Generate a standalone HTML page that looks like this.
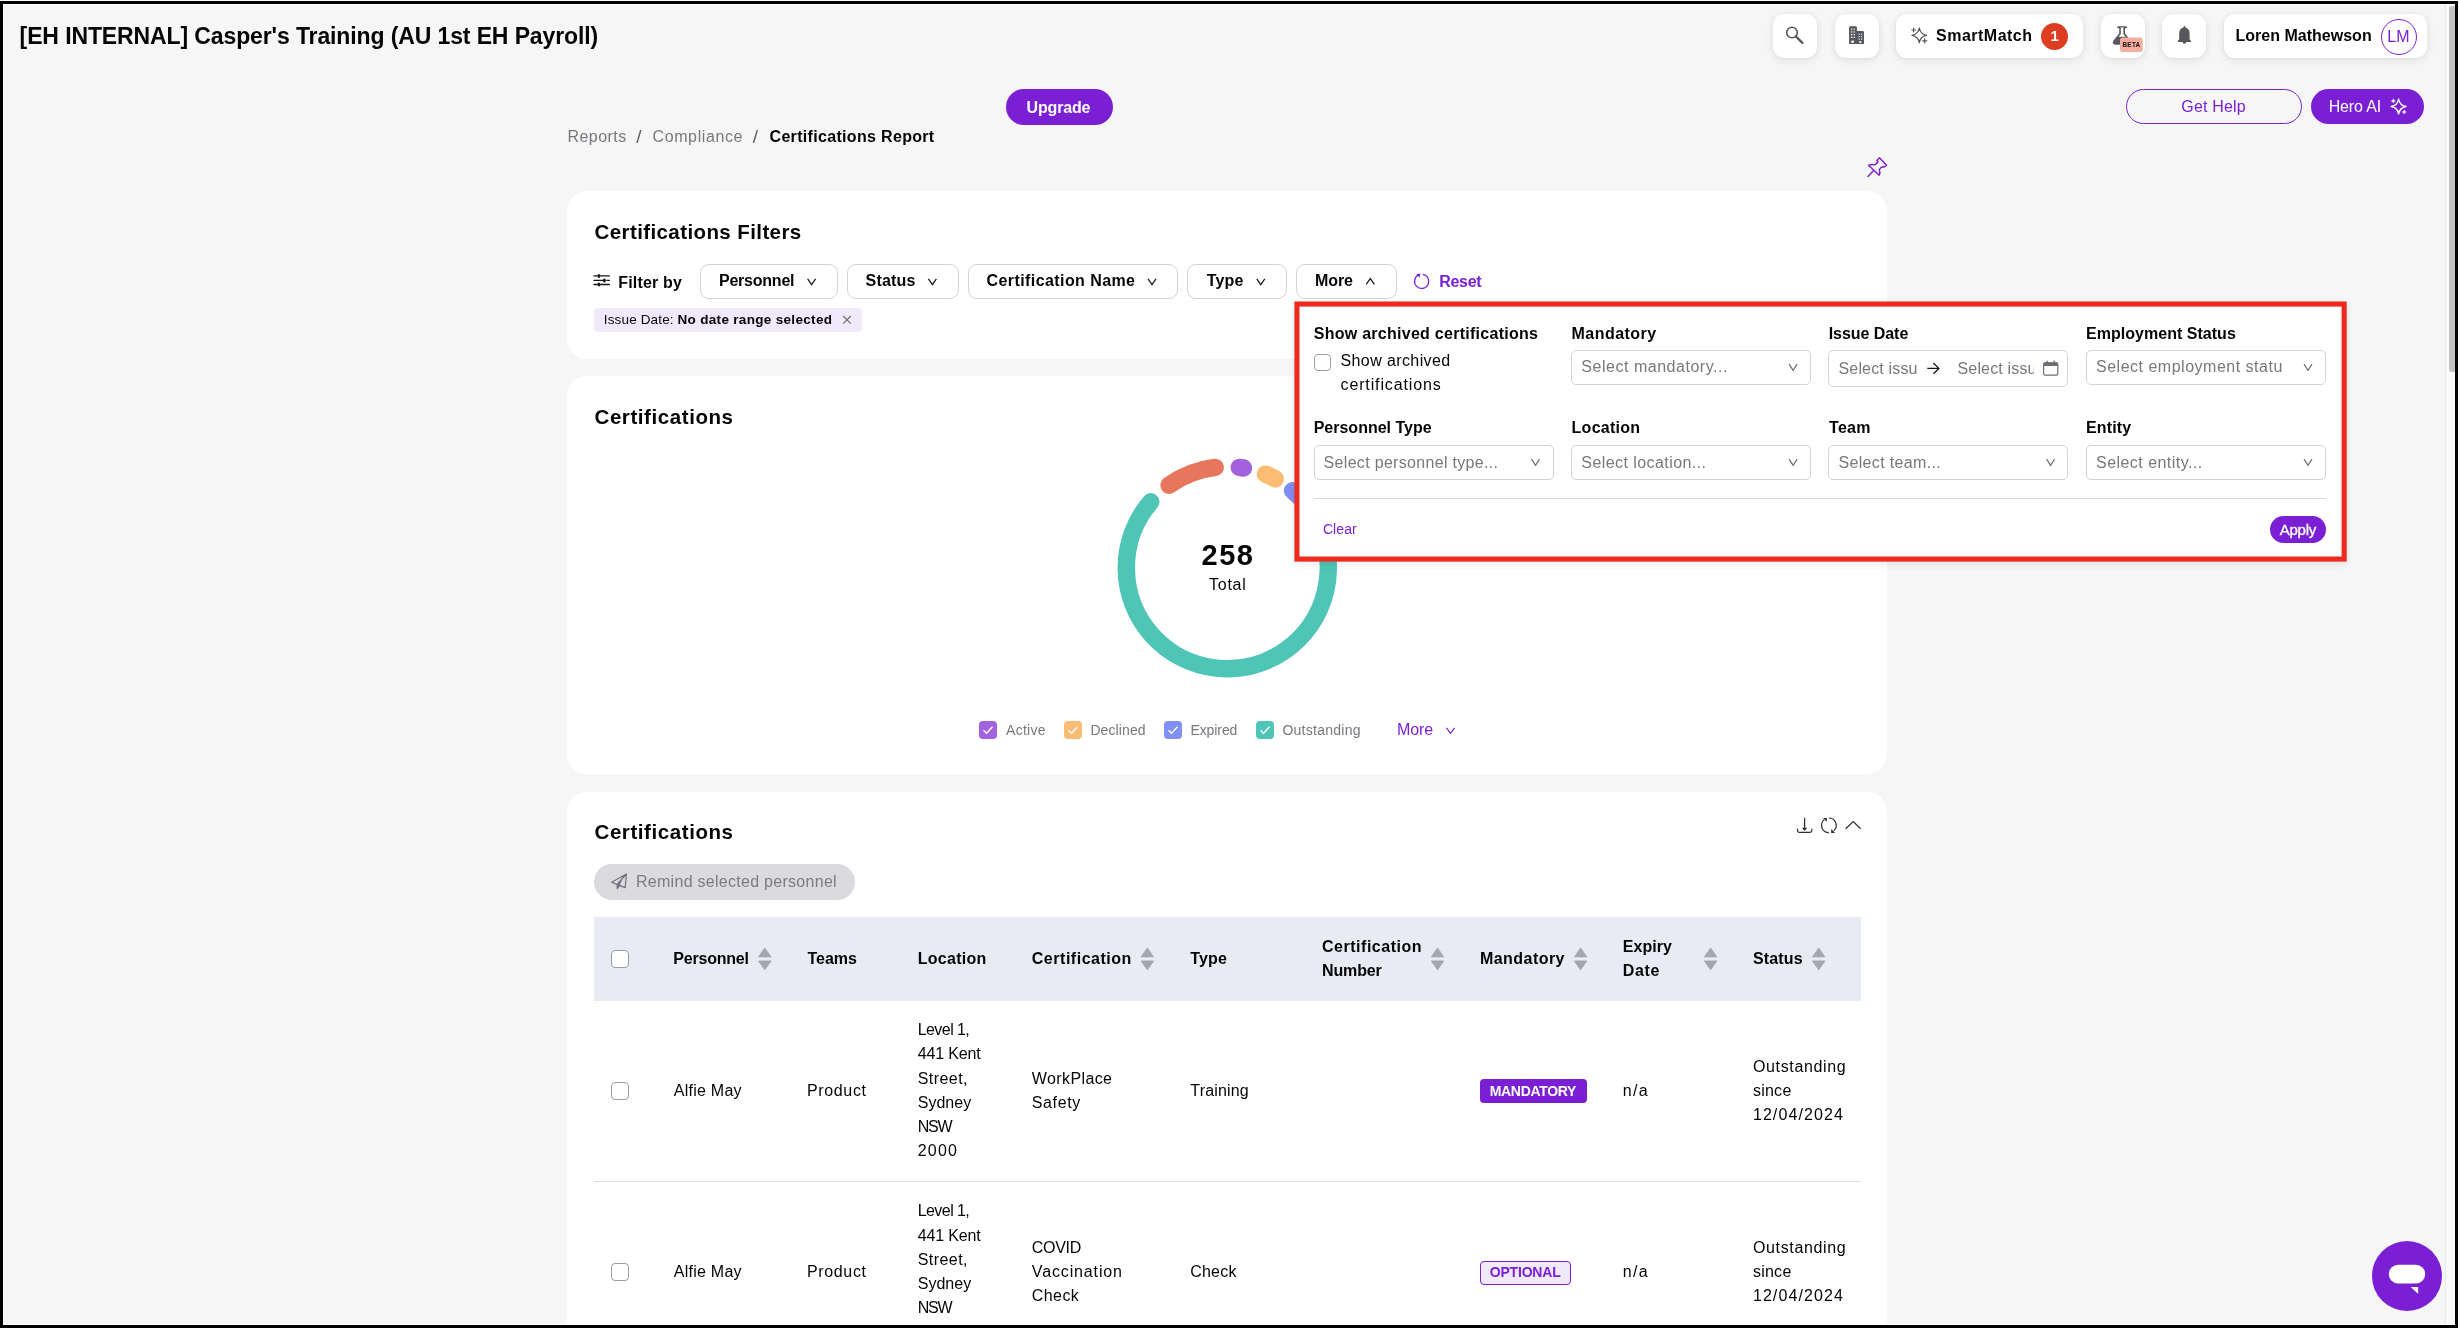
<!DOCTYPE html>
<html lang="en"><head><meta charset="utf-8"><title>Certifications Report</title>
<style>
html,body{margin:0;padding:0;}
body{width:2460px;height:1328px;overflow:hidden;background:#fff;font-family:"Liberation Sans", sans-serif;position:relative;}
#page{position:absolute;left:0;top:0;width:2460px;height:1328px;overflow:hidden;}
#page div,#page svg{position:absolute;box-sizing:border-box;}
#tx{left:0;top:0;width:2460px;height:1328px;will-change:transform;}
.t{position:absolute;white-space:pre;line-height:1em;}
.card{background:#fff;border-radius:20px;}
.hb{background:#fff;border-radius:11px;box-shadow:0 2px 9px rgba(0,0,0,.11),0 0 2px rgba(0,0,0,.05);}
.fb{background:#fff;border:1px solid #d3d3da;border-radius:9px;}
.sel{background:#fff;border:1px solid #d3d3da;border-radius:5px;}
.cb{background:#fff;border:1px solid #9a9ca6;border-radius:4px;}
</style></head>
<body><div id="page">
<div class="" style="left:0px;top:0px;width:2460px;height:1328px;background:#fdfdfd;"></div>
<div class="" style="left:0px;top:1px;width:2458px;height:1327px;background:#000;"></div>
<div class="" style="left:3px;top:4px;width:2452px;height:1321px;background:#fff;"></div>
<div class="" style="left:4px;top:5px;width:2451px;height:1320px;background:#f6f6f6;"></div>
<div class="" style="left:2445px;top:5px;width:10px;height:1320px;background:#fafafa;border-left:1px solid #e9e9e9;"></div>
<div class="" style="left:2449px;top:6px;width:6px;height:366px;background:#c1c1c1;border-radius:3px 0 0 3px;"></div>
<div class="hb" style="left:1773px;top:14px;width:44px;height:44px;"></div>
<div class="hb" style="left:1835px;top:14px;width:44px;height:44px;"></div>
<div class="hb" style="left:1896px;top:14px;width:187px;height:44px;"></div>
<div class="hb" style="left:2101px;top:14px;width:44px;height:44px;"></div>
<div class="hb" style="left:2162px;top:14px;width:44px;height:44px;"></div>
<div class="hb" style="left:2224px;top:14px;width:203px;height:44px;"></div>
<div class="" style="left:2041px;top:22.5px;width:27px;height:27px;background:#de3d22;border-radius:50%;"></div>
<div class="" style="left:2380.5px;top:18.5px;width:36px;height:36px;border:1.5px solid #7a1fd3;border-radius:50%;background:#fff;"></div>
<div class="" style="left:1006px;top:89px;width:107px;height:36px;background:#7a1fd3;border-radius:18px;"></div>
<div class="" style="left:2126px;top:89px;width:176px;height:35px;border:1.5px solid #7a1fd3;border-radius:18px;"></div>
<div class="" style="left:2311px;top:89px;width:113px;height:35px;background:#7a1fd3;border-radius:18px;"></div>
<div class="card" style="left:567px;top:191px;width:1320px;height:168px;"></div>
<div class="fb" style="left:700px;top:264px;width:137.5px;height:34.5px;"></div>
<div class="fb" style="left:847px;top:264px;width:111.5px;height:34.5px;"></div>
<div class="fb" style="left:968px;top:264px;width:210px;height:34.5px;"></div>
<div class="fb" style="left:1187px;top:264px;width:100px;height:34.5px;"></div>
<div class="fb" style="left:1296px;top:264px;width:101px;height:34.5px;"></div>
<div class="" style="left:594px;top:308px;width:268px;height:24px;background:#f0e9fb;border-radius:4px;"></div>
<div class="card" style="left:567px;top:376px;width:1320px;height:398px;"></div>
<svg style="left:0;top:0" width="2460" height="1328" viewBox="0 0 2460 1328"><path d="M1316.48 520.28 A101.0 101.0 0 1 1 1150.73 501.84" fill="none" stroke="#4fc5b7" stroke-width="17.5" stroke-linecap="round"/><path d="M1169.08 485.17 A101.0 101.0 0 0 1 1215.17 467.43" fill="none" stroke="#e6775c" stroke-width="17.5" stroke-linecap="round"/><path d="M1239.26 467.41 A101.0 101.0 0 0 1 1243.45 468.00" fill="none" stroke="#a262de" stroke-width="17.5" stroke-linecap="round"/><path d="M1265.46 474.19 A101.0 101.0 0 0 1 1275.18 478.77" fill="none" stroke="#fdbc74" stroke-width="17.5" stroke-linecap="round"/><path d="M1292.63 490.67 A101.0 101.0 0 0 1 1304.67 502.78" fill="none" stroke="#7f8ff3" stroke-width="17.5" stroke-linecap="round"/></svg>
<div class="" style="left:979px;top:721px;width:18px;height:18px;background:#a262de;border-radius:4px;"><svg style="left:3px;top:4px" width="12" height="10" viewBox="0 0 12 10"><path d="M1.5 5.2 L4.6 8.2 L10.5 1.8" fill="none" stroke="#fff" stroke-width="1.4"/></svg></div>
<div class="" style="left:1064px;top:721px;width:18px;height:18px;background:#fdbc74;border-radius:4px;"><svg style="left:3px;top:4px" width="12" height="10" viewBox="0 0 12 10"><path d="M1.5 5.2 L4.6 8.2 L10.5 1.8" fill="none" stroke="#fff" stroke-width="1.4"/></svg></div>
<div class="" style="left:1164px;top:721px;width:18px;height:18px;background:#7f8ff3;border-radius:4px;"><svg style="left:3px;top:4px" width="12" height="10" viewBox="0 0 12 10"><path d="M1.5 5.2 L4.6 8.2 L10.5 1.8" fill="none" stroke="#fff" stroke-width="1.4"/></svg></div>
<div class="" style="left:1256px;top:721px;width:18px;height:18px;background:#4fc5b7;border-radius:4px;"><svg style="left:3px;top:4px" width="12" height="10" viewBox="0 0 12 10"><path d="M1.5 5.2 L4.6 8.2 L10.5 1.8" fill="none" stroke="#fff" stroke-width="1.4"/></svg></div>
<div class="card" style="left:567px;top:792px;width:1320px;height:560px;"></div>
<div class="" style="left:594px;top:864px;width:261px;height:36px;background:#dadadf;border-radius:18px;"></div>
<div class="" style="left:594px;top:917px;width:1267px;height:83.5px;background:#e8ebf3;"></div>
<div class="cb" style="left:611px;top:950px;width:18px;height:18px;"></div>
<div class="cb" style="left:611px;top:1082px;width:18px;height:18px;"></div>
<div class="" style="left:1480px;top:1079px;width:107px;height:24px;background:#7a1fd3;border-radius:4px;"></div>
<div class="" style="left:594px;top:1181px;width:1267px;height:1px;background:#dcdce1;"></div>
<div class="cb" style="left:611px;top:1263px;width:18px;height:18px;"></div>
<div class="" style="left:1480px;top:1261px;width:91px;height:24px;background:#f0e9fb;border:1px solid #7a1fd3;border-radius:4px;"></div>
<div class="" style="left:1295px;top:302px;width:1051px;height:259px;background:#fff;box-shadow:0 3px 8px rgba(20,40,50,.11),0 0 3px rgba(0,0,0,.05);"></div>
<svg style="left:0;top:0" width="2460" height="1328" viewBox="0 0 2460 1328"><rect x="1296.95" y="304.05" width="1047.2" height="255" fill="none" stroke="#ee2a1e" stroke-width="5.1"/></svg>
<div class="cb" style="left:1314px;top:353.5px;width:17px;height:17px;"></div>
<div class="sel" style="left:1571px;top:350px;width:239.5px;height:34.5px;"></div>
<div class="sel" style="left:1828px;top:350px;width:239.5px;height:36.5px;"></div>
<div class="sel" style="left:2086px;top:350px;width:239.5px;height:34.5px;"></div>
<div class="sel" style="left:1314px;top:445px;width:239.5px;height:34.5px;"></div>
<div class="sel" style="left:1571px;top:445px;width:239.5px;height:34.5px;"></div>
<div class="sel" style="left:1828px;top:445px;width:239.5px;height:34.5px;"></div>
<div class="sel" style="left:2086px;top:445px;width:239.5px;height:34.5px;"></div>
<div class="" style="left:1314px;top:498px;width:1012px;height:1px;background:#d9d9de;"></div>
<div class="" style="left:2270px;top:516px;width:56px;height:27px;background:#7a1fd3;border-radius:14px;"></div>
<svg style="left:0;top:0" width="2460" height="1328" viewBox="0 0 2460 1328"><circle cx="1792" cy="32.5" r="5.3" fill="none" stroke="#56575d" stroke-width="1.6"/><path d="M1795.9 36.5 L1802.4 42.9" stroke="#56575d" stroke-width="2.3" stroke-linecap="round"/><path d="M1849.1 27.4 q0-1.2 1.2-1.2 h5.4 q1.2 0 1.2 1.2 v3.7 h5.9 q1.2 0 1.2 1.2 v11.6 h-14.9 z" fill="#56575d"/><rect x="1851.0" y="28.6" width="1.3" height="1.3" fill="#fff"/><rect x="1853.6" y="28.6" width="1.3" height="1.3" fill="#fff"/><rect x="1851.0" y="31.3" width="1.3" height="1.3" fill="#fff"/><rect x="1853.6" y="31.3" width="1.3" height="1.3" fill="#fff"/><rect x="1851.0" y="34.0" width="1.3" height="1.3" fill="#fff"/><rect x="1853.6" y="34.0" width="1.3" height="1.3" fill="#fff"/><rect x="1851.0" y="36.7" width="1.3" height="1.3" fill="#fff"/><rect x="1853.6" y="36.7" width="1.3" height="1.3" fill="#fff"/><rect x="1858.6" y="33.6" width="1.2" height="1.2" fill="#fff" opacity=".85"/><rect x="1861.0" y="33.6" width="1.2" height="1.2" fill="#fff" opacity=".85"/><rect x="1858.6" y="36.1" width="1.2" height="1.2" fill="#fff" opacity=".85"/><rect x="1861.0" y="36.1" width="1.2" height="1.2" fill="#fff" opacity=".85"/><rect x="1858.6" y="38.6" width="1.2" height="1.2" fill="#fff" opacity=".85"/><rect x="1861.0" y="38.6" width="1.2" height="1.2" fill="#fff" opacity=".85"/><rect x="1851.3" y="40.6" width="2.6" height="2.2" fill="#fff"/><rect x="1859.3" y="41.2" width="2" height="1.8" fill="#fff"/><path d="M1919.3 27.999999999999996 Q1920.4242 34.175799999999995 1926.6 35.3 Q1920.4242 36.4242 1919.3 42.599999999999994 Q1918.1758 36.4242 1912.0 35.3 Q1918.1758 34.175799999999995 1919.3 27.999999999999996 Z" fill="none" stroke="#56575d" stroke-width="1.3" stroke-linejoin="round"/><path d="M1913.6 28.2 v3.6 M1911.8 30 h3.6 M1924.7 38.7 v4.2 M1922.6 40.8 h4.2" stroke="#56575d" stroke-width="1.2" stroke-linecap="round"/><path d="M2118.2 27.2 h7.8" stroke="#56575d" stroke-width="2" stroke-linecap="round"/><path d="M2120 27.5 v6.2 l-5.9 7.4 q-1.6 2.6 1.4 2.8 h13.2 q3 -0.2 1.4 -2.8 l-5.9 -7.4 v-6.2" fill="#fff" stroke="#56575d" stroke-width="1.6" stroke-linejoin="round"/><path d="M2117.6 36.8 h9 l3.4 4.4 q1.3 2 -1 2 h-13.8 q-2.3 0 -1 -2 z" fill="#56575d"/><rect x="2120" y="37.6" width="22.7" height="14.4" rx="2.8" fill="#f3ae9f"/><path d="M2184.4 26 q0.9 0 0.9 0.9 v0.5 q4.3 1 4.3 6.2 v5.6 l1.5 2 v0.7 h-13.4 v-0.7 l1.5 -2 v-5.6 q0 -5.2 4.3 -6.2 v-0.5 q0 -0.9 0.9 -0.9 z" fill="#56575d"/><circle cx="2184.4" cy="42.3" r="1.5" fill="#56575d"/><path d="M2398.6 99.1 Q2399.7396 105.3604 2406.0 106.5 Q2399.7396 107.6396 2398.6 113.9 Q2397.4604 107.6396 2391.2 106.5 Q2397.4604 105.3604 2398.6 99.1 Z" fill="none" stroke="#fff" stroke-width="1.4" stroke-linejoin="round"/><path d="M2393.3 98.2 Q2393.597 100.60300000000001 2396.0 100.9 Q2393.597 101.197 2393.3 103.60000000000001 Q2393.003 101.197 2390.6000000000004 100.9 Q2393.003 100.60300000000001 2393.3 98.2 Z" fill="#fff"/><path d="M2404.2 109.2 Q2404.497 111.60300000000001 2406.8999999999996 111.9 Q2404.497 112.197 2404.2 114.60000000000001 Q2403.903 112.197 2401.5 111.9 Q2403.903 111.60300000000001 2404.2 109.2 Z" fill="#fff"/><path d="M1868.5 165.3 Q1871.5 164 1874.4 164.8 Q1877 163.6 1878.1 161.6 L1876.8 160.4 L1879.5 157.7 L1886.6 165.2 L1884.2 167 L1882.5 166.7 Q1880.3 168 1879.3 169.7 Q1880.6 172.3 1879.15 175.3 Z M1868 176.5 L1873.6 170.5" fill="none" stroke="#7a1fd3" stroke-width="1.4" stroke-linejoin="round" stroke-linecap="round"/><path d="M594 275.9 H609.3 M594 280.4 H603 M607 280.4 H609.3 M594 284.5 H609.3" stroke="#15151a" stroke-width="1.4" stroke-linecap="round"/><ellipse cx="598.9" cy="275.9" rx="1.3" ry="2" fill="#15151a"/><ellipse cx="604.4" cy="280.4" rx="1.5" ry="2" fill="#15151a"/><ellipse cx="598.9" cy="284.5" rx="1.3" ry="2" fill="#15151a"/><path d="M807.6 278.8 L811.6 284.6 L815.6 278.8" fill="none" stroke="#15151a" stroke-width="1.2"/><path d="M928.4 278.8 L932.4 284.6 L936.4 278.8" fill="none" stroke="#15151a" stroke-width="1.2"/><path d="M1148 278.8 L1152.0 284.6 L1156 278.8" fill="none" stroke="#15151a" stroke-width="1.2"/><path d="M1256.8 278.8 L1260.8 284.6 L1264.8 278.8" fill="none" stroke="#15151a" stroke-width="1.2"/><path d="M1366.2 284.3 L1370.3000000000002 278.6 L1374.4 284.3" fill="none" stroke="#15151a" stroke-width="1.2"/><path d="M1422.69 274.27 A7.1 7.1 0 1 1 1418.37 275.03" fill="none" stroke="#7a1fd3" stroke-width="1.25"/><path d="M1416.4 274.2 L1420.5 273.6 L1419.4 277.6 Z" fill="#7a1fd3"/><path d="M843.2 316 L850.8 323.6 M850.8 316 L843.2 323.6" stroke="#6a6a72" stroke-width="1.1"/><path d="M1446.4 727.8 L1450.5 733.3 L1454.6 727.8" fill="none" stroke="#7a1fd3" stroke-width="1.2"/><path d="M1804.6 817.8 V829.6" stroke="#2e2e33" stroke-width="1.2"/><path d="M1802.5 828 H1806.7 L1804.6 830.5 Z" fill="#2e2e33" stroke="#2e2e33" stroke-width=".6" stroke-linejoin="round"/><path d="M1797.5 829.2 V830.6 Q1797.5 832.4 1799.3 832.4 H1810 Q1811.8 832.4 1811.8 830.6 V829.2" fill="none" stroke="#2e2e33" stroke-width="1.2" stroke-linecap="round"/><path d="M1828.90 818.00 A7.3 7.3 0 0 1 1833.78 830.72" fill="none" stroke="#2e2e33" stroke-width="1.2"/><path d="M1828.90 832.60 A7.3 7.3 0 0 1 1824.02 819.88" fill="none" stroke="#2e2e33" stroke-width="1.2"/><path d="M1822.9 818 H1826.8 V821.8 Z" fill="#2e2e33"/><path d="M1831.2 829 V832.9 H1835.1 Z" fill="#2e2e33"/><path d="M1845.7 828.8 L1853.2 821.6 L1860.7 828.8" fill="none" stroke="#2e2e33" stroke-width="1.2"/><path d="M611.6 882.2 L626.4 874 L625.2 887.6 L619.6 885.4 L617.3 888.7 L617.1 884.4 Z M617.1 884.4 L626.4 874" fill="none" stroke="#6f7077" stroke-width="1.15" stroke-linejoin="round"/><path d="M617.1 884.4 L622.6 878.5 L619.6 885.4 L617.3 888.7 Z" fill="#6f7077"/><path d="M764.75 947.9 L771.05 956.9 H758.45 Z" fill="#a3a6b0" stroke="#a3a6b0" stroke-width=".8" stroke-linejoin="round"/><path d="M764.75 969.9 L771.05 960.9 H758.45 Z" fill="#a3a6b0" stroke="#a3a6b0" stroke-width=".8" stroke-linejoin="round"/><path d="M1147.35 947.9 L1153.6499999999999 956.9 H1141.05 Z" fill="#a3a6b0" stroke="#a3a6b0" stroke-width=".8" stroke-linejoin="round"/><path d="M1147.35 969.9 L1153.6499999999999 960.9 H1141.05 Z" fill="#a3a6b0" stroke="#a3a6b0" stroke-width=".8" stroke-linejoin="round"/><path d="M1437.55 947.9 L1443.85 956.9 H1431.25 Z" fill="#a3a6b0" stroke="#a3a6b0" stroke-width=".8" stroke-linejoin="round"/><path d="M1437.55 969.9 L1443.85 960.9 H1431.25 Z" fill="#a3a6b0" stroke="#a3a6b0" stroke-width=".8" stroke-linejoin="round"/><path d="M1580.6 947.9 L1586.8999999999999 956.9 H1574.3 Z" fill="#a3a6b0" stroke="#a3a6b0" stroke-width=".8" stroke-linejoin="round"/><path d="M1580.6 969.9 L1586.8999999999999 960.9 H1574.3 Z" fill="#a3a6b0" stroke="#a3a6b0" stroke-width=".8" stroke-linejoin="round"/><path d="M1710.6 947.9 L1716.8999999999999 956.9 H1704.3 Z" fill="#a3a6b0" stroke="#a3a6b0" stroke-width=".8" stroke-linejoin="round"/><path d="M1710.6 969.9 L1716.8999999999999 960.9 H1704.3 Z" fill="#a3a6b0" stroke="#a3a6b0" stroke-width=".8" stroke-linejoin="round"/><path d="M1818.7 947.9 L1825.0 956.9 H1812.4 Z" fill="#a3a6b0" stroke="#a3a6b0" stroke-width=".8" stroke-linejoin="round"/><path d="M1818.7 969.9 L1825.0 960.9 H1812.4 Z" fill="#a3a6b0" stroke="#a3a6b0" stroke-width=".8" stroke-linejoin="round"/><path d="M1789.1 364.1 L1793.1 370.3 L1797.1 364.1" fill="none" stroke="#6d6e75" stroke-width="1.2"/><path d="M2304 364.1 L2308.0 370.3 L2312 364.1" fill="none" stroke="#6d6e75" stroke-width="1.2"/><path d="M1531.5 459.1 L1535.5 465.3 L1539.5 459.1" fill="none" stroke="#6d6e75" stroke-width="1.2"/><path d="M1789.1 459.1 L1793.1 465.3 L1797.1 459.1" fill="none" stroke="#6d6e75" stroke-width="1.2"/><path d="M2046.6 459.1 L2050.6 465.3 L2054.6 459.1" fill="none" stroke="#6d6e75" stroke-width="1.2"/><path d="M2304 459.1 L2308.0 465.3 L2312 459.1" fill="none" stroke="#6d6e75" stroke-width="1.2"/><path d="M1927.3 368.4 H1938.6 M1933.4 363 L1938.9 368.4 L1933.4 373.8" fill="none" stroke="#15151a" stroke-width="1.3"/><rect x="2043.6" y="362.8" width="14.2" height="12.4" rx="1.4" fill="#fff" stroke="#6d6e75" stroke-width="1.2"/><path d="M2043.6 364 q0-1.4 1.4-1.4 h11.4 q1.4 0 1.4 1.4 v2 h-14.2 z" fill="#6d6e75"/><path d="M2047.2 360.8 v2 M2054.3 360.8 v2" stroke="#6d6e75" stroke-width="1.4"/></svg>
<div class="" style="left:2372px;top:1241px;width:70px;height:70px;background:#7a1fd3;border-radius:50%;"><svg style="left:0;top:0" width="70" height="70" viewBox="0 0 70 70"><rect x="16.8" y="23.7" width="36.4" height="18.7" rx="9.35" fill="#fff"/><path d="M38.7 46 H46.2 V53 Z" fill="#fff"/></svg></div>
<div id="tx">
<span class="t" style="left:19.60px;top:25.00px;font-size:23px;font-weight:700;color:#050507;letter-spacing:-0.116px;">[EH INTERNAL] Casper&#x27;s Training (AU 1st EH Payroll)</span>
<span class="t" style="left:1936.10px;top:28.00px;font-size:16px;font-weight:700;color:#050507;letter-spacing:0.480px;">SmartMatch</span>
<span class="t" style="left:2050.60px;top:28.00px;font-size:15px;font-weight:700;color:#fff;letter-spacing:0.000px;">1</span>
<span class="t" style="left:2235.40px;top:28.00px;font-size:16px;font-weight:700;color:#050507;letter-spacing:0.020px;">Loren Mathewson</span>
<span class="t" style="left:2387.20px;top:29.00px;font-size:16px;font-weight:400;color:#7a1fd3;letter-spacing:0.166px;">LM</span>
<span class="t" style="left:2122.50px;top:42.00px;font-size:6.4px;font-weight:700;color:#15110f;letter-spacing:0.259px;">BETA</span>
<span class="t" style="left:1026.50px;top:100.00px;font-size:16px;font-weight:700;color:#fff;letter-spacing:-0.151px;">Upgrade</span>
<span class="t" style="left:567.50px;top:129.00px;font-size:16px;font-weight:400;color:#77777d;letter-spacing:0.445px;">Reports</span>
<span class="t" style="left:636.20px;top:127.00px;font-size:19px;font-weight:400;color:#606067;letter-spacing:0.000px;">/</span>
<span class="t" style="left:652.50px;top:129.00px;font-size:16px;font-weight:400;color:#77777d;letter-spacing:0.613px;">Compliance</span>
<span class="t" style="left:752.80px;top:127.00px;font-size:19px;font-weight:400;color:#606067;letter-spacing:0.000px;">/</span>
<span class="t" style="left:769.50px;top:129.00px;font-size:16px;font-weight:700;color:#050507;letter-spacing:0.323px;">Certifications Report</span>
<span class="t" style="left:2181.30px;top:99.00px;font-size:16px;font-weight:400;color:#7a1fd3;letter-spacing:0.180px;">Get Help</span>
<span class="t" style="left:2328.70px;top:99.00px;font-size:16px;font-weight:400;color:#fff;letter-spacing:-0.160px;">Hero AI</span>
<span class="t" style="left:594.50px;top:222.00px;font-size:20.5px;font-weight:700;color:#050507;letter-spacing:0.404px;">Certifications Filters</span>
<span class="t" style="left:618.20px;top:275.00px;font-size:16px;font-weight:700;color:#050507;letter-spacing:0.196px;">Filter by</span>
<span class="t" style="left:719.00px;top:273.00px;font-size:16px;font-weight:700;color:#050507;letter-spacing:-0.232px;">Personnel</span>
<span class="t" style="left:865.50px;top:273.00px;font-size:16px;font-weight:700;color:#050507;letter-spacing:0.219px;">Status</span>
<span class="t" style="left:986.50px;top:273.00px;font-size:16px;font-weight:700;color:#050507;letter-spacing:0.419px;">Certification Name</span>
<span class="t" style="left:1206.70px;top:273.00px;font-size:16px;font-weight:700;color:#050507;letter-spacing:0.148px;">Type</span>
<span class="t" style="left:1315.00px;top:273.00px;font-size:16px;font-weight:700;color:#050507;letter-spacing:-0.078px;">More</span>
<span class="t" style="left:1439.20px;top:274.00px;font-size:16px;font-weight:700;color:#7a1fd3;letter-spacing:-0.270px;">Reset</span>
<span class="t" style="left:603.80px;top:313.00px;font-size:13.5px;font-weight:400;color:#050507;letter-spacing:0.150px;">Issue Date: </span>
<span class="t" style="left:677.50px;top:313.00px;font-size:13.5px;font-weight:700;color:#050507;letter-spacing:0.318px;">No date range selected</span>
<span class="t" style="left:594.50px;top:407.00px;font-size:20.5px;font-weight:700;color:#050507;letter-spacing:0.577px;">Certifications</span>
<span class="t" style="left:1201.50px;top:541.00px;font-size:29px;font-weight:700;color:#050507;letter-spacing:1.555px;">258</span>
<span class="t" style="left:1209.10px;top:577.00px;font-size:16px;font-weight:400;color:#050507;letter-spacing:0.701px;">Total</span>
<span class="t" style="left:1006.00px;top:723.00px;font-size:14px;font-weight:400;color:#77777d;letter-spacing:0.295px;">Active</span>
<span class="t" style="left:1090.40px;top:723.00px;font-size:14px;font-weight:400;color:#77777d;letter-spacing:0.102px;">Declined</span>
<span class="t" style="left:1190.40px;top:723.00px;font-size:14px;font-weight:400;color:#77777d;letter-spacing:-0.078px;">Expired</span>
<span class="t" style="left:1282.40px;top:723.00px;font-size:14px;font-weight:400;color:#77777d;letter-spacing:0.270px;">Outstanding</span>
<span class="t" style="left:1397.00px;top:722.00px;font-size:16px;font-weight:400;color:#7a1fd3;letter-spacing:-0.084px;">More</span>
<span class="t" style="left:594.50px;top:822.00px;font-size:20.5px;font-weight:700;color:#050507;letter-spacing:0.577px;">Certifications</span>
<span class="t" style="left:636.00px;top:874.00px;font-size:16px;font-weight:400;color:#7b7b82;letter-spacing:0.280px;">Remind selected personnel</span>
<span class="t" style="left:673.30px;top:951.00px;font-size:16px;font-weight:700;color:#050507;letter-spacing:-0.207px;">Personnel</span>
<span class="t" style="left:807.60px;top:951.00px;font-size:16px;font-weight:700;color:#050507;letter-spacing:-0.079px;">Teams</span>
<span class="t" style="left:917.70px;top:951.00px;font-size:16px;font-weight:700;color:#050507;letter-spacing:0.275px;">Location</span>
<span class="t" style="left:1031.80px;top:951.00px;font-size:16px;font-weight:700;color:#050507;letter-spacing:0.521px;">Certification</span>
<span class="t" style="left:1190.30px;top:951.00px;font-size:16px;font-weight:700;color:#050507;letter-spacing:0.115px;">Type</span>
<span class="t" style="left:1322.00px;top:939.00px;font-size:16px;font-weight:700;color:#050507;letter-spacing:0.521px;">Certification</span>
<span class="t" style="left:1322.00px;top:963.00px;font-size:16px;font-weight:700;color:#050507;letter-spacing:-0.131px;">Number</span>
<span class="t" style="left:1480.00px;top:951.00px;font-size:16px;font-weight:700;color:#050507;letter-spacing:0.449px;">Mandatory</span>
<span class="t" style="left:1622.80px;top:939.00px;font-size:16px;font-weight:700;color:#050507;letter-spacing:0.016px;">Expiry</span>
<span class="t" style="left:1622.80px;top:963.00px;font-size:16px;font-weight:700;color:#050507;letter-spacing:0.604px;">Date</span>
<span class="t" style="left:1752.90px;top:951.00px;font-size:16px;font-weight:700;color:#050507;letter-spacing:0.179px;">Status</span>
<span class="t" style="left:673.80px;top:1083.00px;font-size:16px;font-weight:400;color:#050507;letter-spacing:0.250px;">Alfie May</span>
<span class="t" style="left:807.00px;top:1083.00px;font-size:16px;font-weight:400;color:#050507;letter-spacing:0.643px;">Product</span>
<span class="t" style="left:917.70px;top:1022.00px;font-size:16px;font-weight:400;color:#050507;letter-spacing:-0.564px;">Level 1,</span>
<span class="t" style="left:917.70px;top:1046.00px;font-size:16px;font-weight:400;color:#050507;letter-spacing:-0.166px;">441 Kent</span>
<span class="t" style="left:917.70px;top:1071.00px;font-size:16px;font-weight:400;color:#050507;letter-spacing:0.443px;">Street,</span>
<span class="t" style="left:917.70px;top:1095.00px;font-size:16px;font-weight:400;color:#050507;letter-spacing:0.025px;">Sydney</span>
<span class="t" style="left:917.70px;top:1119.00px;font-size:16px;font-weight:400;color:#050507;letter-spacing:-1.164px;">NSW</span>
<span class="t" style="left:917.70px;top:1143.00px;font-size:16px;font-weight:400;color:#050507;letter-spacing:1.235px;">2000</span>
<span class="t" style="left:1031.80px;top:1071.00px;font-size:16px;font-weight:400;color:#050507;letter-spacing:0.392px;">WorkPlace</span>
<span class="t" style="left:1031.80px;top:1095.00px;font-size:16px;font-weight:400;color:#050507;letter-spacing:0.608px;">Safety</span>
<span class="t" style="left:1190.30px;top:1083.00px;font-size:16px;font-weight:400;color:#050507;letter-spacing:0.169px;">Training</span>
<span class="t" style="left:1489.70px;top:1084.00px;font-size:14px;font-weight:700;color:#fff;letter-spacing:-0.311px;">MANDATORY</span>
<span class="t" style="left:1622.80px;top:1083.00px;font-size:16px;font-weight:400;color:#050507;letter-spacing:1.275px;">n/a</span>
<span class="t" style="left:1752.90px;top:1059.00px;font-size:16px;font-weight:400;color:#050507;letter-spacing:0.652px;">Outstanding</span>
<span class="t" style="left:1752.90px;top:1083.00px;font-size:16px;font-weight:400;color:#050507;letter-spacing:0.260px;">since</span>
<span class="t" style="left:1752.90px;top:1107.00px;font-size:16px;font-weight:400;color:#050507;letter-spacing:1.091px;">12/04/2024</span>
<span class="t" style="left:673.80px;top:1264.00px;font-size:16px;font-weight:400;color:#050507;letter-spacing:0.250px;">Alfie May</span>
<span class="t" style="left:807.00px;top:1264.00px;font-size:16px;font-weight:400;color:#050507;letter-spacing:0.643px;">Product</span>
<span class="t" style="left:917.70px;top:1203.00px;font-size:16px;font-weight:400;color:#050507;letter-spacing:-0.564px;">Level 1,</span>
<span class="t" style="left:917.70px;top:1228.00px;font-size:16px;font-weight:400;color:#050507;letter-spacing:-0.166px;">441 Kent</span>
<span class="t" style="left:917.70px;top:1252.00px;font-size:16px;font-weight:400;color:#050507;letter-spacing:0.443px;">Street,</span>
<span class="t" style="left:917.70px;top:1276.00px;font-size:16px;font-weight:400;color:#050507;letter-spacing:0.025px;">Sydney</span>
<span class="t" style="left:917.70px;top:1300.00px;font-size:16px;font-weight:400;color:#050507;letter-spacing:-1.164px;">NSW</span>
<span class="t" style="left:917.70px;top:1324.00px;font-size:16px;font-weight:400;color:#050507;letter-spacing:1.235px;">2000</span>
<span class="t" style="left:1031.80px;top:1240.00px;font-size:16px;font-weight:400;color:#050507;letter-spacing:-0.293px;">COVID</span>
<span class="t" style="left:1031.80px;top:1264.00px;font-size:16px;font-weight:400;color:#050507;letter-spacing:0.867px;">Vaccination</span>
<span class="t" style="left:1031.80px;top:1288.00px;font-size:16px;font-weight:400;color:#050507;letter-spacing:0.410px;">Check</span>
<span class="t" style="left:1190.30px;top:1264.00px;font-size:16px;font-weight:400;color:#050507;letter-spacing:0.185px;">Check</span>
<span class="t" style="left:1489.70px;top:1265.00px;font-size:14px;font-weight:700;color:#7a1fd3;letter-spacing:-0.178px;">OPTIONAL</span>
<span class="t" style="left:1622.80px;top:1264.00px;font-size:16px;font-weight:400;color:#050507;letter-spacing:1.275px;">n/a</span>
<span class="t" style="left:1752.90px;top:1240.00px;font-size:16px;font-weight:400;color:#050507;letter-spacing:0.652px;">Outstanding</span>
<span class="t" style="left:1752.90px;top:1264.00px;font-size:16px;font-weight:400;color:#050507;letter-spacing:0.260px;">since</span>
<span class="t" style="left:1752.90px;top:1288.00px;font-size:16px;font-weight:400;color:#050507;letter-spacing:1.091px;">12/04/2024</span>
<span class="t" style="left:1313.70px;top:326.00px;font-size:16px;font-weight:700;color:#050507;letter-spacing:0.272px;">Show archived certifications</span>
<span class="t" style="left:1571.60px;top:326.00px;font-size:16px;font-weight:700;color:#050507;letter-spacing:0.449px;">Mandatory</span>
<span class="t" style="left:1828.70px;top:326.00px;font-size:16px;font-weight:700;color:#050507;letter-spacing:-0.050px;">Issue Date</span>
<span class="t" style="left:2086.10px;top:326.00px;font-size:16px;font-weight:700;color:#050507;letter-spacing:0.021px;">Employment Status</span>
<span class="t" style="left:1340.50px;top:353.00px;font-size:16px;font-weight:400;color:#050507;letter-spacing:0.396px;">Show archived</span>
<span class="t" style="left:1340.50px;top:377.00px;font-size:16px;font-weight:400;color:#050507;letter-spacing:0.875px;">certifications</span>
<span class="t" style="left:1581.30px;top:359.00px;font-size:16px;font-weight:400;color:#77777d;letter-spacing:0.525px;">Select mandatory...</span>
<span class="t" style="left:1838.50px;top:361.00px;font-size:16px;font-weight:400;color:#77777d;letter-spacing:0.163px;">Select issu</span>
<span class="t" style="left:1957.50px;top:361.00px;font-size:16px;font-weight:400;color:#77777d;letter-spacing:0.158px;width:76.6px;overflow:hidden;">Select issue</span>
<span class="t" style="left:2096.00px;top:359.00px;font-size:16px;font-weight:400;color:#77777d;letter-spacing:0.504px;">Select employment statu</span>
<span class="t" style="left:1313.70px;top:420.00px;font-size:16px;font-weight:700;color:#050507;letter-spacing:-0.005px;">Personnel Type</span>
<span class="t" style="left:1571.60px;top:420.00px;font-size:16px;font-weight:700;color:#050507;letter-spacing:0.247px;">Location</span>
<span class="t" style="left:1829.10px;top:420.00px;font-size:16px;font-weight:700;color:#050507;letter-spacing:0.230px;">Team</span>
<span class="t" style="left:2086.10px;top:420.00px;font-size:16px;font-weight:700;color:#050507;letter-spacing:0.109px;">Entity</span>
<span class="t" style="left:1323.60px;top:455.00px;font-size:16px;font-weight:400;color:#77777d;letter-spacing:0.312px;">Select personnel type...</span>
<span class="t" style="left:1581.30px;top:455.00px;font-size:16px;font-weight:400;color:#77777d;letter-spacing:0.429px;">Select location...</span>
<span class="t" style="left:1838.50px;top:455.00px;font-size:16px;font-weight:400;color:#77777d;letter-spacing:0.329px;">Select team...</span>
<span class="t" style="left:2096.00px;top:455.00px;font-size:16px;font-weight:400;color:#77777d;letter-spacing:0.459px;">Select entity...</span>
<span class="t" style="left:1322.90px;top:522.00px;font-size:14px;font-weight:400;color:#7a1fd3;letter-spacing:0.083px;">Clear</span>
<span class="t" style="left:2279.70px;top:522.00px;font-size:15px;font-weight:400;color:#fff;letter-spacing:-0.233px;-webkit-text-stroke:0.35px #fff;">Apply</span>
</div>
<div style="left:0;top:1325px;width:2458px;height:3px;background:#000;"></div>
<div style="left:3px;top:1324px;width:2452px;height:1px;background:#fff;"></div>
</div></body></html>
